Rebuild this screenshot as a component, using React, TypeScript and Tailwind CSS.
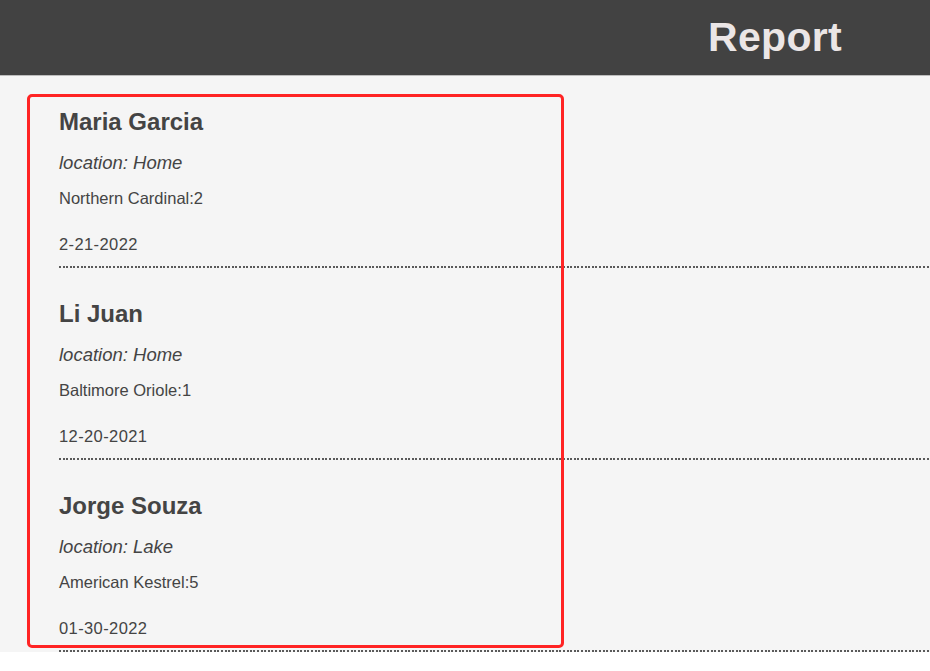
const reports = [
  { name: "Maria Garcia", location: "Home", bird: "Northern Cardinal", count: 2, date: "2-21-2022" },
  { name: "Li Juan", location: "Home", bird: "Baltimore Oriole", count: 1, date: "12-20-2021" },
  { name: "Jorge Souza", location: "Lake", bird: "American Kestrel", count: 5, date: "01-30-2022" },
];

function ReportItem(props: { r: (typeof reports)[number] }) {
  const { name, location, bird, count, date } = props.r;
  return (
    <li className="pt-[32px]">
      <h2 className="text-[24px] leading-[28px] font-bold">{name}</h2>
      <p className="mt-[15px] text-[18.5px] leading-[24px] italic">location: {location}</p>
      <p className="mt-[13px] text-[16.5px] leading-[20px]">
        {bird}:{count}
      </p>
      <p className="mt-[26px] text-[16.5px] leading-[20px] tracking-[0.4px]">{date}</p>
      <div className="mt-[12px] h-[2px] bg-[repeating-linear-gradient(90deg,#5a5a5a_0_2px,transparent_2px_3.6px)]" />
    </li>
  );
}

export default function App() {
  return (
    <div className="min-h-screen bg-white font-['Liberation_Sans',Arial,sans-serif] text-[#444]">
      <header className="h-[76px] bg-[#424242] border-b border-[#bdbdbd] flex items-center justify-end pr-[88px]">
        <h1 className="text-[41px] font-bold text-[#ebe6e6] tracking-[0.3px]">Report</h1>
      </header>
      <main className="relative bg-[#f5f5f5] pl-[59px]">
        <ul>
          {reports.map((r, idx) => (
            <ReportItem r={r} key={idx} />
          ))}
        </ul>
        <div className="absolute left-[27px] top-[18px] w-[537px] h-[554px] border-[3px] border-[#ff2424] rounded-[5px] pointer-events-none" />
      </main>
    </div>
  );
}
